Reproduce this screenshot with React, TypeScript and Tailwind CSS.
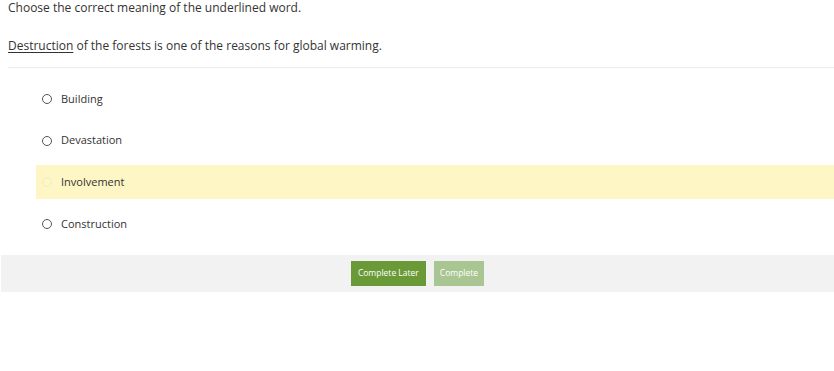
import React from 'react';

const options = [
    { label: 'Building', selected: false },
    { label: 'Devastation', selected: false },
    { label: 'Involvement', selected: true },
    { label: 'Construction', selected: false },
];

export default function App() {
    return (
        <div className="w-[834px] h-[371px] bg-white text-[#333] font-['Open_Sans',sans-serif]">
            <div className="px-2 text-[12px] leading-[16px]">
                <p>Choose the correct meaning of the underlined word.</p>
                <p className="mt-[22px]">
                    <span className="underline underline-offset-2">Destruction</span> of the forests is one of the reasons for global warming.
                </p>
            </div>

            <div className="mt-[13px] ml-2 border-t border-[#ececec]" />

            {/* Options */}
            <div className="pt-[14px] pl-9">
                {options.map((o) => (
                    <div
                        key={o.label}
                        className={`flex items-center h-[34px] mb-[7.7px] pl-[6px] text-[11px] ${o.selected ? 'bg-[#fff6c6]' : ''}`}
                    >
                        <span
                            className={`w-[10px] h-[10px] rounded-full border ${o.selected ? 'border-[#f4ecc0]' : 'border-[#555]'}`}
                        />
                        <span className="ml-[9px]">{o.label}</span>
                    </div>
                ))}
            </div>

            {/* Footer */}
            <div className="mt-[14px] ml-px h-[37px] bg-[#f2f2f2] flex items-center justify-center gap-2">
                <button className="h-[25px] px-[7px] bg-[#6a9a37] text-white text-[8.5px]">Complete Later</button>
                <button className="h-[25px] px-[6px] bg-[#a9c592] text-white text-[8.5px]">Complete</button>
            </div>
        </div>
    );
}
